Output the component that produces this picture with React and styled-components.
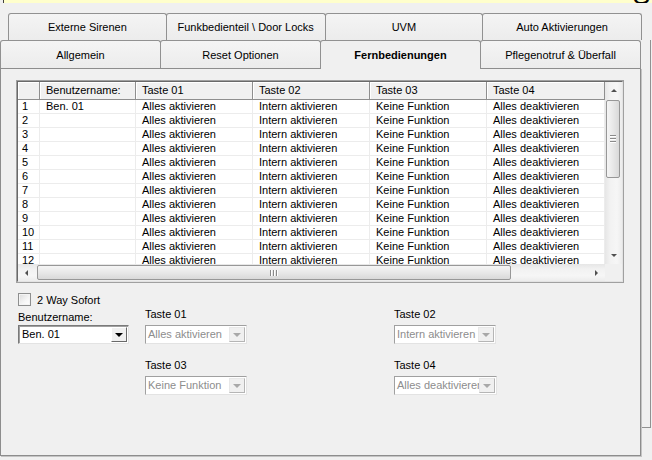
import React from 'react';
import styled, { createGlobalStyle } from 'styled-components';

const GlobalStyle = createGlobalStyle`
  *, *::before, *::after { box-sizing: border-box; }
  html, body { margin: 0; padding: 0; background: #f0f0f0; }
  body {
    font-family: "Liberation Sans", Arial, sans-serif;
    font-size: 11px;
    color: #000;
  }
`;

const Screen = styled.div`
  width: 652px;
  height: 460px;
  overflow: hidden;
  background: #f0f0f0;
`;

const HintBar = styled.div`
  height: 3px;
  margin-left: 3px;
  padding-right: 2px;
  border-left: 1px solid #404040;
  background: #ffffcc;
  display: flex;
  justify-content: flex-end;
  align-items: flex-end;
  overflow: hidden;
`;

const HintGlyph = styled.span`
  font-size: 26px;
  line-height: 26px;
  margin-bottom: -5px;
  color: #000;
`;

const TabControl = styled.div`
  position: relative;
  margin-top: 10px;
  width: 641px;

  &::after {
    content: '';
    position: absolute;
    right: -10px;
    top: 27px;
    width: 10px;
    height: 388px;
    border-right: 1px solid #919191;
    border-bottom: 1px solid #919191;
  }
`;

const TabRow = styled.div`
  display: flex;
  align-items: flex-start;
  padding-left: ${(p) => p.$indent || 0}px;
`;

const Tab = styled.div`
  position: relative;
  z-index: ${(p) => (p.$active ? 2 : 1)};
  width: ${(p) => p.$w}px;
  height: ${(p) => (p.$active ? p.$h + 1 : p.$h)}px;
  margin-right: -1px;
  margin-bottom: ${(p) => (p.$active ? -1 : 0)}px;
  border: 1px solid #919191;
  border-bottom: none;
  border-radius: 3px 3px 0 0;
  background: ${(p) => (p.$active ? '#f0f0f0' : 'linear-gradient(#f4f4f4, #ececec)')};
  display: flex;
  align-items: center;
  justify-content: center;
  padding-bottom: ${(p) => (p.$active ? 1 : 0)}px;
  font-weight: ${(p) => (p.$active ? 'bold' : 'normal')};
  white-space: nowrap;
`;

const Panel = styled.div`
  position: relative;
  z-index: 1;
  height: 388px;
  border: 1px solid #8d8d8d;
  box-shadow: 1px 1px 0 #c4c4c4;
  background: #f0f0f0;
  padding: 11px 0 0 15px;
`;

const GridFrame = styled.div`
  width: 608px;
  height: 203px;
  border: 1px solid #a0a0a0;
`;

const GridInner = styled.div`
  height: 100%;
  border-top: 1px solid #696969;
  border-left: 1px solid #696969;
  border-right: 1px solid #e3e3e3;
  border-bottom: 1px solid #e3e3e3;
  display: grid;
  grid-template-columns: 1fr 17px;
  grid-template-rows: 1fr 17px;
  background: #fff;
`;

const GridBody = styled.div`
  overflow: hidden;
  background: #fff;
`;

const COLS = '22px 96px 117px 117px 117px 118px';

const Row = styled.div`
  display: grid;
  grid-template-columns: ${COLS};
`;

const HeadCell = styled.div`
  height: 18px;
  line-height: 17px;
  padding-left: 6px;
  background: #f0f0f0;
  border-right: 1px solid #8e8e8e;
  border-bottom: 1px solid #8e8e8e;
  box-shadow: inset 1px 1px 0 #fff;
  white-space: nowrap;
  overflow: hidden;
`;

const Cell = styled.div`
  height: 14px;
  line-height: 13px;
  padding-left: ${(p) => (p.$num ? 4 : 6)}px;
  border-right: 1px solid #ececec;
  border-bottom: 1px solid #ececec;
  white-space: nowrap;
  overflow: hidden;
`;

const VTrack = styled.div`
  display: flex;
  flex-direction: column;
  background: linear-gradient(to right, #e6e6e6, #f2f2f2 30%, #f6f6f6 70%, #ececec);
`;

const HTrack = styled.div`
  display: flex;
  align-items: flex-start;
  background: linear-gradient(#e6e6e6, #f2f2f2 30%, #f6f6f6 70%, #ececec);
`;

const ScrollButton = styled.div`
  width: 17px;
  height: 17px;
  flex: none;
  display: flex;
  align-items: center;
  justify-content: center;
`;

const Arrow = styled.span`
  width: 0;
  height: 0;
  border-style: solid;
  border-color: transparent;
  ${(p) => p.$dir === 'up' && 'border-width: 0 3px 3px 3px; border-bottom-color: #505050;'}
  ${(p) => p.$dir === 'down' && 'border-width: 3px 3px 0 3px; border-top-color: #505050;'}
  ${(p) => p.$dir === 'left' && 'border-width: 3px 3px 3px 0; border-right-color: #505050;'}
  ${(p) => p.$dir === 'right' && 'border-width: 3px 0 3px 3px; border-left-color: #505050;'}
`;

const VThumb = styled.div`
  width: 14px;
  height: 78px;
  margin: 1px 0 0 1px;
  border: 1px solid #979797;
  border-radius: 2px;
  background: linear-gradient(to right, #f5f5f5, #e8e8e8 50%, #d9d9d9);
  display: flex;
  flex-direction: column;
  align-items: center;
  justify-content: center;
  gap: 1px;
`;

const HThumb = styled.div`
  width: 474px;
  height: 15px;
  margin: 1px 0 0 2px;
  border: 1px solid #979797;
  border-radius: 2px;
  background: linear-gradient(#f5f5f5, #e8e8e8 50%, #d9d9d9);
  display: flex;
  align-items: center;
  justify-content: center;
  gap: 1px;
`;

const Grip = styled.span`
  display: block;
  background: #8a8a8a;
  width: ${(p) => (p.$horizontal ? 1 : 6)}px;
  height: ${(p) => (p.$horizontal ? 6 : 1)}px;
  box-shadow: ${(p) => (p.$horizontal ? '1px 0 0 #fff' : '0 1px 0 #fff')};
  margin: ${(p) => (p.$horizontal ? '0 1px 0 0' : '0 0 1px 0')};
`;

const Spacer = styled.div`
  flex: 1;
`;

const Corner = styled.div`
  background: #f0f0f0;
`;

const CheckRow = styled.label`
  display: flex;
  align-items: center;
  gap: 6px;
  margin: 10px 0 0 2px;
  height: 13px;
`;

const CheckBox = styled.span`
  width: 13px;
  height: 13px;
  border: 1px solid #8e8f8f;
  background: linear-gradient(135deg, #dcdcdc, #f6f6f6 60%, #fff);
  box-shadow: inset 0 0 0 1px #f4f4f4;
`;

const Form = styled.div`
  display: grid;
  grid-template-columns: 127px 249px 1fr;
  row-gap: 15px;
  margin: 2px 0 0 2px;
`;

const Field = styled.div`
  display: flex;
  flex-direction: column;
  justify-content: flex-end;
`;

const FieldLabel = styled.div`
  line-height: 13px;
  margin-bottom: ${(p) => (p.$tight ? 1 : 4)}px;
  white-space: nowrap;
`;

const Combo = styled.div`
  display: flex;
  width: ${(p) => p.$w}px;
  height: 19px;
  background: #fff;
  border: 1px solid;
  border-color: ${(p) => (p.$disabled ? '#a0a0a0 #e3e3e3 #e3e3e3 #a0a0a0' : '#7a7a7a #e3e3e3 #e3e3e3 #7a7a7a')};
  box-shadow: ${(p) => (p.$disabled ? 'none' : 'inset 1px 1px 0 #a0a0a0')};
`;

const ComboText = styled.div`
  flex: 1;
  line-height: 17px;
  padding-left: ${(p) => (p.$disabled ? 2 : 3)}px;
  color: ${(p) => (p.$disabled ? '#8d8d8d' : '#000')};
  white-space: nowrap;
  overflow: hidden;
`;

const ComboButton = styled.div`
  width: 16px;
  flex: none;
  margin: 1px 1px 1px 0;
  background: #f0f0f0;
  border: 1px solid;
  border-color: ${(p) => (p.$disabled ? '#e8e8e8 #b5b5b5 #b5b5b5 #e8e8e8' : '#fff #696969 #696969 #fff')};
  display: flex;
  align-items: center;
  justify-content: center;
`;

const ComboArrow = styled.span`
  width: 0;
  height: 0;
  border-style: solid;
  border-width: 4px 4px 0 4px;
  border-color: ${(p) => (p.$disabled ? '#a8a8a8' : '#000')} transparent transparent transparent;
`;

const topTabs = [
  { label: 'Externe Sirenen', w: 161 },
  { label: 'Funkbedienteil \\ Door Locks', w: 162 },
  { label: 'UVM', w: 161 },
  { label: 'Auto Aktivierungen', w: 162 },
];

const bottomTabs = [
  { label: 'Allgemein', w: 161 },
  { label: 'Reset Optionen', w: 161 },
  { label: 'Fernbedienungen', w: 161, active: true },
  { label: 'Pflegenotruf & Überfall', w: 161 },
];

const headers = ['', 'Benutzername:', 'Taste 01', 'Taste 02', 'Taste 03', 'Taste 04'];

const rows = Array.from({ length: 12 }, (_, i) => ({
  num: i + 1,
  name: i === 0 ? 'Ben. 01' : '',
  t1: 'Alles aktivieren',
  t2: 'Intern aktivieren',
  t3: 'Keine Funktion',
  t4: 'Alles deaktivieren',
}));

function ComboBox({ value, width, disabled }) {
  return (
    <Combo $w={width} $disabled={disabled}>
      <ComboText $disabled={disabled}>{value}</ComboText>
      <ComboButton $disabled={disabled}>
        <ComboArrow $disabled={disabled} />
      </ComboButton>
    </Combo>
  );
}

function RemoteGrid() {
  return (
    <GridFrame>
      <GridInner>
        <GridBody>
          <Row>
            {headers.map((h, i) => (
              <HeadCell key={i}>{h}</HeadCell>
            ))}
          </Row>
          {rows.map((r) => (
            <Row key={r.num}>
              <Cell $num>{r.num}</Cell>
              <Cell>{r.name}</Cell>
              <Cell>{r.t1}</Cell>
              <Cell>{r.t2}</Cell>
              <Cell>{r.t3}</Cell>
              <Cell>{r.t4}</Cell>
            </Row>
          ))}
        </GridBody>
        <VTrack>
          <ScrollButton><Arrow $dir="up" /></ScrollButton>
          <VThumb>
            <Grip /><Grip /><Grip />
          </VThumb>
          <Spacer />
          <ScrollButton><Arrow $dir="down" /></ScrollButton>
        </VTrack>
        <HTrack>
          <ScrollButton><Arrow $dir="left" /></ScrollButton>
          <HThumb>
            <Grip $horizontal /><Grip $horizontal /><Grip $horizontal />
          </HThumb>
          <Spacer />
          <ScrollButton><Arrow $dir="right" /></ScrollButton>
        </HTrack>
        <Corner />
      </GridInner>
    </GridFrame>
  );
}

export default function App() {
  return (
    <>
      <GlobalStyle />
      <Screen>
        <HintBar>
          <HintGlyph>S</HintGlyph>
        </HintBar>
        <TabControl>
          <TabRow $indent={8}>
            {topTabs.map((t) => (
              <Tab key={t.label} $w={t.w} $h={27}>{t.label}</Tab>
            ))}
          </TabRow>
          <TabRow>
            {bottomTabs.map((t) => (
              <Tab key={t.label} $w={t.w} $h={28} $active={t.active}>{t.label}</Tab>
            ))}
          </TabRow>
          <Panel>
            <RemoteGrid />
            <CheckRow>
              <CheckBox />
              <span>2 Way Sofort</span>
            </CheckRow>
            <Form>
              <Field>
                <FieldLabel $tight>Benutzername:</FieldLabel>
                <ComboBox value="Ben. 01" width={111} />
              </Field>
              <Field>
                <FieldLabel>Taste 01</FieldLabel>
                <ComboBox value="Alles aktivieren" width={102} disabled />
              </Field>
              <Field>
                <FieldLabel>Taste 02</FieldLabel>
                <ComboBox value="Intern aktivieren" width={102} disabled />
              </Field>
              <div />
              <Field>
                <FieldLabel>Taste 03</FieldLabel>
                <ComboBox value="Keine Funktion" width={102} disabled />
              </Field>
              <Field>
                <FieldLabel>Taste 04</FieldLabel>
                <ComboBox value="Alles deaktivieren" width={103} disabled />
              </Field>
            </Form>
          </Panel>
        </TabControl>
      </Screen>
    </>
  );
}
